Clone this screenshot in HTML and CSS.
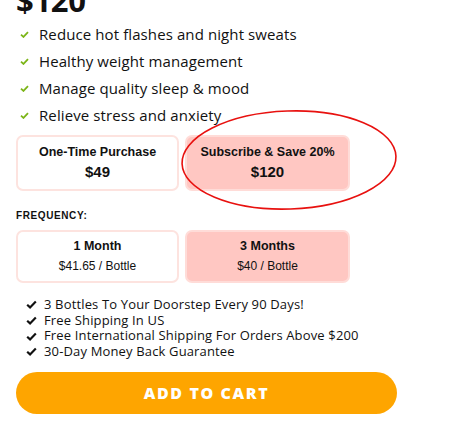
FILE: index.html
```html
<!DOCTYPE html>
<html>
<head>
<meta charset="utf-8">
<link rel="stylesheet" href="styles.css">
</head>
<body>
<div class="page">
  <div class="price">$120</div>
  <ul class="benefits">
    <li><svg class="gcheck" viewBox="0 0 10 8"><path d="M1 4.2 L3.8 6.8 L9 1.2" fill="none" stroke="#7cb518" stroke-width="2"/></svg>Reduce hot flashes and night sweats</li>
    <li><svg class="gcheck" viewBox="0 0 10 8"><path d="M1 4.2 L3.8 6.8 L9 1.2" fill="none" stroke="#7cb518" stroke-width="2"/></svg>Healthy weight management</li>
    <li><svg class="gcheck" viewBox="0 0 10 8"><path d="M1 4.2 L3.8 6.8 L9 1.2" fill="none" stroke="#7cb518" stroke-width="2"/></svg>Manage quality sleep &amp; mood</li>
    <li><svg class="gcheck" viewBox="0 0 10 8"><path d="M1 4.2 L3.8 6.8 L9 1.2" fill="none" stroke="#7cb518" stroke-width="2"/></svg>Relieve stress and anxiety</li>
  </ul>
  <div class="options">
    <div class="opt">
      <div class="opt-title">One-Time Purchase</div>
      <div class="opt-price">$49</div>
    </div>
    <div class="opt selected">
      <div class="opt-title">Subscribe &amp; Save 20%</div>
      <div class="opt-price">$120</div>
    </div>
    <svg class="circle" viewBox="0 0 220 104"><ellipse cx="110" cy="52" rx="107" ry="49" fill="none" stroke="#e8110f" stroke-width="1.6" transform="rotate(-2 110 52)"/></svg>
  </div>
  <div class="freq-label">FREQUENCY:</div>
  <div class="options freq">
    <div class="opt">
      <div class="f-title">1 Month</div>
      <div class="f-sub">$41.65 / Bottle</div>
    </div>
    <div class="opt selected">
      <div class="f-title">3 Months</div>
      <div class="f-sub">$40 / Bottle</div>
    </div>
  </div>
  <ul class="perks">
    <li><svg class="bcheck" viewBox="0 0 12 10"><path d="M1.2 5.2 L4.4 8.2 L10.8 1.6" fill="none" stroke="#111" stroke-width="2.4"/></svg>3 Bottles To Your Doorstep Every 90 Days!</li>
    <li><svg class="bcheck" viewBox="0 0 12 10"><path d="M1.2 5.2 L4.4 8.2 L10.8 1.6" fill="none" stroke="#111" stroke-width="2.4"/></svg>Free Shipping In US</li>
    <li><svg class="bcheck" viewBox="0 0 12 10"><path d="M1.2 5.2 L4.4 8.2 L10.8 1.6" fill="none" stroke="#111" stroke-width="2.4"/></svg>Free International Shipping For Orders Above $200</li>
    <li><svg class="bcheck" viewBox="0 0 12 10"><path d="M1.2 5.2 L4.4 8.2 L10.8 1.6" fill="none" stroke="#111" stroke-width="2.4"/></svg>30-Day Money Back Guarantee</li>
  </ul>
  <button class="cart">ADD TO CART</button>
</div>
</body>
</html>
```
FILE: styles.css
```css
* { box-sizing: border-box; }
html, body { margin: 0; padding: 0; background: #fff; overflow: hidden; }
body { font-family: "Open Sans", "Noto Sans", sans-serif; color: #111; }
.page { width: 450px; height: 432px; padding: 0 0 0 16px; }
.price {
  font-size: 31px; font-weight: 700; line-height: 32px; margin-top: -16px;
  color: #111; letter-spacing: -0.3px;
}
.benefits { list-style: none; margin: 4px 0 0 0; padding: 0; }
.benefits li {
  display: flex; align-items: center; height: 27px;
  font-size: 15px; letter-spacing: 0.1px; color: #111;
}
.gcheck { width: 9px; height: 7px; margin: 1px 10px 0 4px; }
.options {
  position: relative; display: grid; grid-template-columns: 163px 165px;
  gap: 6px; margin-top: 7px;
}
.opt {
  border: 2px solid #fde3df; border-radius: 7px; background: #fff;
  height: 56px; display: flex; flex-direction: column; align-items: center;
  justify-content: center; font-family: "Liberation Sans", Arial, sans-serif;
}
.opt.selected { background: #ffc7c2; border-color: #ffdcd8; }
.opt-title { font-size: 12.5px; font-weight: 700; margin-top: -2px; }
.opt-price { font-size: 15px; font-weight: 700; margin-top: 4px; }
.circle { position: absolute; left: 163px; top: -27px; width: 220px; height: 104px; }
.freq-label {
  font-family: "Liberation Sans", Arial, sans-serif; font-weight: 700;
  font-size: 10px; letter-spacing: 0.6px; margin-top: 19px;
}
.freq { margin-top: 9px; }
.freq .opt { height: 53px; }
.f-title { font-size: 12.5px; font-weight: 700; margin-top: -2px; }
.f-sub { font-size: 12px; margin-top: 6px; }
.perks { list-style: none; margin: 14px 0 0 0; padding: 0; }
.perks li {
  display: flex; align-items: center; height: 15.7px; line-height: 15.7px;
  font-size: 13px; letter-spacing: 0.15px; color: #111;
}
.bcheck { width: 11px; height: 9px; margin: 0 7px 0 10px; }
.cart {
  display: block; margin-top: 12px; width: 381px; height: 42px;
  border: none; border-radius: 21px; background: #fea500; color: #fff;
  font-family: "Open Sans", sans-serif; font-weight: 800; font-size: 16px;
  letter-spacing: 1.6px; padding: 0;
}
```
